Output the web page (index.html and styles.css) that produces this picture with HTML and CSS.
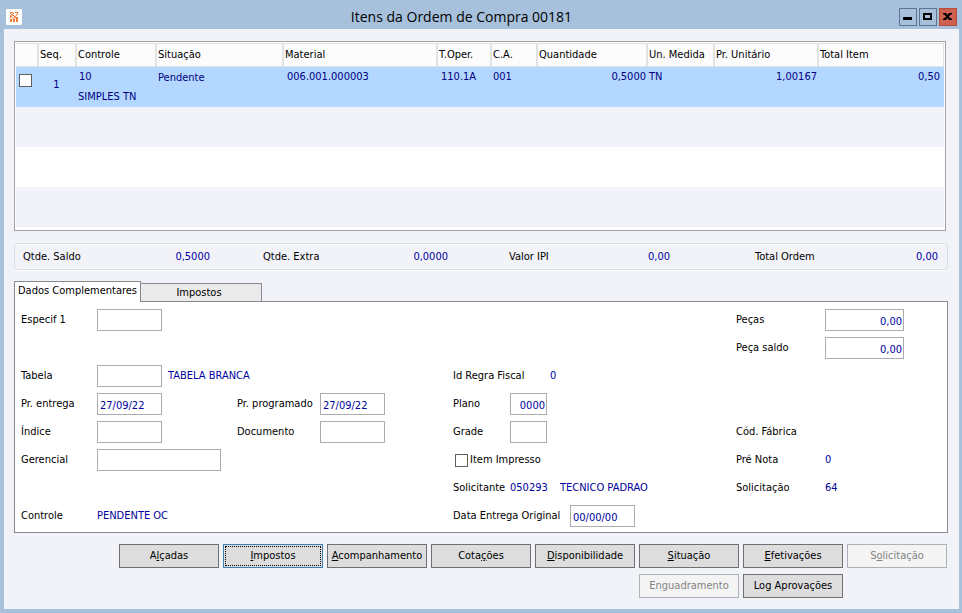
FILE: index.html
```
<!DOCTYPE html>
<html lang="pt-BR">
<head>
<meta charset="UTF-8">
<meta name="viewport" content="width=device-width, initial-scale=1.0">
<title>Itens da Ordem de Compra 00181</title>
<link rel="stylesheet" href="styles.css">
</head>
<body>
  <header class="titlebar">
    <svg class="app-icon" width="16" height="16" viewBox="0 0 16 16">
      <rect width="16" height="16" rx="1" fill="#fff"/>
      <path d="M4 3h3v1H5v1H4zM9 3h3v2h-1V4H9zM4 6h1v2H4zM4 10h2v3H4zM7 10h2v3H7zM10 8h2v5h-2z" fill="#f47b3c"/>
      <path d="M4 9l3-3 2 2 3-4M5 6l3-2M6 9h4" fill="none" stroke="#f9702a"/>
    </svg>
    <h1>Itens da Ordem de Compra 00181</h1>
    <div class="window-buttons">
      <button type="button" aria-label="Minimizar">
        <svg width="16" height="16" viewBox="0 0 16 16"><path d="M3 8h9v3H3z"/></svg>
      </button>
      <button type="button" aria-label="Maximizar">
        <svg width="16" height="16" viewBox="0 0 16 16"><path d="M3 4h9v7H3zM5 6v3h5V6z" fill-rule="evenodd"/></svg>
      </button>
      <button type="button" class="close" aria-label="Fechar">
        <svg width="16" height="16" viewBox="0 0 16 16"><path d="M3 4h3l1.500 2L9 4h3v1L9 7v1l3 2v1H9L7.500 9 6 11H3v-1l3-2V7L3 5z"/></svg>
      </button>
    </div>
  </header>

  <main class="window">
    <div class="items">
      <table>
        <colgroup>
          <col class="c-check"><col class="c-seq"><col class="c-controle"><col class="c-situacao"><col>
          <col class="c-toper"><col class="c-ca"><col class="c-qtd"><col class="c-un"><col class="c-pr"><col class="c-total">
        </colgroup>
        <thead>
          <tr>
            <th></th><th>Seq.</th><th>Controle</th><th>Situação</th><th>Material</th><th>T.Oper.</th>
            <th>C.A.</th><th>Quantidade</th><th>Un. Medida</th><th>Pr. Unitário</th><th>Total Item</th>
          </tr>
        </thead>
        <tbody>
          <tr class="selected">
            <td class="check"><input type="checkbox" aria-label="Selecionar item 1"></td>
            <td class="seq">1</td>
            <td><span class="code">10</span><br>SIMPLES TN</td>
            <td class="status">Pendente</td>
            <td class="code">006.001.000003</td>
            <td class="code">110.1A</td>
            <td>001</td>
            <td class="num">0,5000</td>
            <td>TN</td>
            <td class="num">1,00167</td>
            <td class="num last">0,50</td>
          </tr>
          <tr><td colspan="11"></td></tr>
          <tr><td colspan="11"></td></tr>
          <tr><td colspan="11"></td></tr>
        </tbody>
      </table>
    </div>

    <div class="totals">
      <div><span>Qtde. Saldo</span><span class="value">0,5000</span></div>
      <div><span>Qtde. Extra</span><span class="value">0,0000</span></div>
      <div><span>Valor IPI</span><span class="value">0,00</span></div>
      <div><span>Total Ordem</span><span class="value">0,00</span></div>
    </div>

    <div class="tabs" role="tablist">
      <button type="button" role="tab" class="tab active" aria-selected="true">Dados Complementares</button>
      <button type="button" role="tab" class="tab" aria-selected="false">Impostos</button>
    </div>

    <form class="panel">
      <div class="row">
        <label for="especif">Especif 1</label>
        <input type="text" id="especif">
        <label for="pecas" class="col-d">Peças</label>
        <input type="text" id="pecas" class="amount" value="0,00">
      </div>
      <div class="row">
        <label for="peca-saldo" class="col-d">Peça saldo</label>
        <input type="text" id="peca-saldo" class="amount" value="0,00">
      </div>
      <div class="row">
        <label for="tabela">Tabela</label>
        <div class="field">
          <input type="text" id="tabela">
          <span class="value">TABELA BRANCA</span>
        </div>
        <div class="field wide col-c">
          <span class="regra">Id Regra Fiscal</span>
          <span class="value">0</span>
        </div>
      </div>
      <div class="row">
        <label for="entrega">Pr. entrega</label>
        <input type="text" id="entrega" value="27/09/22">
        <label for="programado" class="col-b">Pr. programado</label>
        <input type="text" id="programado" value="27/09/22">
        <label for="plano" class="col-c">Plano</label>
        <input type="text" id="plano" class="short" value="0000">
      </div>
      <div class="row">
        <label for="indice">Índice</label>
        <input type="text" id="indice">
        <label for="documento" class="col-b">Documento</label>
        <input type="text" id="documento">
        <label for="grade" class="col-c">Grade</label>
        <input type="text" id="grade" class="short">
        <span class="col-d">Cód. Fábrica</span>
      </div>
      <div class="row">
        <label for="gerencial">Gerencial</label>
        <input type="text" id="gerencial" class="long">
        <label class="field check-field wide col-c"><input type="checkbox">Item Impresso</label>
        <span class="col-d">Pré Nota</span>
        <span class="value">0</span>
      </div>
      <div class="row">
        <span class="col-c">Solicitante</span>
        <div class="field">
          <span class="value solicitante">050293</span>
          <span class="value">TECNICO PADRAO</span>
        </div>
        <span class="col-d">Solicitação</span>
        <span class="value">64</span>
      </div>
      <div class="row">
        <span>Controle</span>
        <span class="value">PENDENTE OC</span>
        <div class="field wide col-c">
          <label for="original" class="original">Data Entrega Original</label>
          <input type="text" id="original" value="00/00/00">
        </div>
      </div>
    </form>

    <div class="actions">
      <button type="button">A<u>l</u>çadas</button>
      <button type="button" class="focused"><u>I</u>mpostos</button>
      <button type="button"><u>A</u>companhamento</button>
      <button type="button">Cota<u>ç</u>ões</button>
      <button type="button"><u>D</u>isponibilidade</button>
      <button type="button"><u>S</u>ituação</button>
      <button type="button"><u>E</u>fetivações</button>
      <button type="button" disabled>S<u>o</u>licitação</button>
      <button type="button" class="second-row" disabled>En<u>g</u>uadramento</button>
      <button type="button">Log Aprovações</button>
    </div>
  </main>
</body>
</html>
```

FILE: styles.css
```
* {
  box-sizing: border-box;
}
body {
  display: flex;
  flex-direction: column;
  min-height: 100vh;
  margin: 0;
  padding: 0 3px 4px 4px;
  background-color: #a7c0dc;
  color: #000;
  font-family: Tahoma, "DejaVu Sans Condensed", sans-serif;
  font-size: 11px;
  line-height: 20px;
}
button,
input {
  font: inherit;
  color: inherit;
}

/* title bar */
.titlebar {
  display: grid;
  grid-template-columns: 20px 1fr 60px;
  align-items: center;
  height: 29px;
  padding-top: 5px;
}
.app-icon {
  margin-left: 2px;
}
.titlebar h1 {
  margin: 0;
  font-family: "Open Sans", sans-serif;
  font-size: 14px;
  font-weight: normal;
  text-align: center;
}
.window-buttons {
  display: flex;
  justify-content: flex-end;
  gap: 2px;
  padding-right: 2px;
}
.window-buttons button {
  width: 18px;
  height: 18px;
  padding: 0;
  background-color: transparent;
  border: 1px solid #60738f;
}
.window-buttons svg {
  display: block;
}
.window-buttons .close {
  background-color: #cd604f;
  border-color: #b74b3c;
}

.window {
  flex: 1;
  padding: 12px 11px 11px 10px;
  background-color: #f2f3f9;
}

/* items table */
.items {
  margin-right: 2px;
  padding: 1px 1px 3px;
  background-color: #fff;
  border: 1px solid #a0a1a7;
}
table {
  width: 100%;
  table-layout: fixed;
  border-collapse: separate;
  border-spacing: 0;
}
.c-check { width: 23px; }
.c-seq { width: 38px; }
.c-controle { width: 80px; }
.c-situacao { width: 127px; }
.c-toper { width: 54px; }
.c-ca { width: 46px; }
.c-qtd { width: 110px; }
.c-un { width: 67px; }
.c-pr { width: 104px; }
.c-total { width: 125px; }
th {
  height: 24px;
  padding: 0 0 0 1px;
  background-color: #fcfcfc;
  border-right: 2px solid #e2e2e2;
  border-top: 1px solid #e2e2e2;
  border-bottom: 1px solid #e2e2e2;
  font-weight: normal;
  text-align: left;
  white-space: nowrap;
}
th:last-child {
  border-right-width: 1px;
}
td {
  height: 40px;
  padding: 0 2px 0 1px;
  color: #00007f;
  vertical-align: top;
  white-space: nowrap;
}
tbody tr:nth-child(even) {
  background-color: #f2f3f9;
}
tbody .selected {
  background-color: #b3d7ff;
}
.code {
  padding-left: 3px;
}
span.code {
  padding-left: 1px;
}
.num {
  text-align: right;
}
.last {
  padding-right: 4px;
}
.seq {
  padding-top: 8px;
  padding-right: 4px;
  text-align: center;
}
.status {
  padding-top: 1px;
}
.check {
  padding: 7px 3px;
}

input[type="checkbox"] {
  appearance: none;
  display: block;
  width: 13px;
  height: 13px;
  margin: 0;
  background-color: #fff;
  border: 1px solid #5e5e5e;
}

/* totals */
.totals {
  display: grid;
  grid-template-columns: 240fr 246fr 246fr 183fr;
  margin-top: 12px;
  padding: 3px 9px 2px 8px;
  border: 1px solid #dadde3;
  border-radius: 3px;
  box-shadow: 0 1px 0 #fff, inset 0 1px 0 #fff;
}
.totals div {
  display: flex;
  justify-content: space-between;
}
.totals div:nth-child(1) { padding-right: 53px; }
.totals div:nth-child(2) { padding-right: 61px; }
.totals div:nth-child(3) { padding-right: 85px; }
.value {
  color: #0000a0;
}

/* tabs */
.tabs {
  display: flex;
  align-items: flex-end;
  margin-top: 11px;
}
.tab {
  width: 121px;
  height: 18px;
  padding: 0 4px 0 0;
  background-color: #eaeaea;
  border: 1px solid #898990;
  border-width: 1px 1px 0 0;
  line-height: 18px;
}
.tab.active {
  z-index: 1;
  width: 127px;
  height: 21px;
  margin-bottom: -1px;
  padding: 0 0 2px;
  background-color: #fff;
  border-left-width: 1px;
}

/* form */
.panel {
  padding: 4px 0 2px 6px;
  background-color: #fff;
  border: 1px solid #898990;
}
.row {
  display: grid;
  grid-template-columns: 76px 140px 83px 133px 57px 1fr 89px 122px;
  align-items: center;
  height: 28px;
  white-space: nowrap;
}
.col-b { grid-column: 3; }
.col-c { grid-column: 5; }
.col-c.wide { grid-column: 5 / 7; }
.col-d { grid-column: 7; }
.field {
  display: flex;
  align-items: center;
}
.field .value {
  margin-left: 6px;
}
input[type="text"] {
  width: 65px;
  height: 22px;
  padding: 2px 2px 0;
  background-color: #fff;
  border: 1px solid #ababb0;
  border-radius: 0;
  color: #0000a0;
}
input.amount {
  width: 79px;
  padding-right: 1px;
  text-align: right;
}
input.short {
  width: 37px;
  padding-right: 1px;
  text-align: right;
}
input.long {
  width: 124px;
}
.row .amount { width: 79px; }
.row .short { width: 37px; }
.row .long { width: 124px; }
.regra {
  width: 91px;
}
.check-field {
  gap: 2px;
  padding-left: 2px;
}
.field .solicitante {
  width: 50px;
  margin-left: 0;
}
.field .solicitante + .value {
  margin-left: 0;
}
.original {
  width: 117px;
}

/* buttons */
.actions {
  display: grid;
  grid-template-columns: repeat(8, 100px);
  justify-content: end;
  gap: 6px 4px;
  margin-top: 11px;
  padding-right: 1px;
}
.actions button {
  height: 24px;
  padding: 0;
  background-color: #dddddd;
  border: 1px solid #707070;
  line-height: 20px;
}
.actions .focused {
  border-color: #3c7fb1;
  outline: 1px dotted #000;
  outline-offset: -3px;
}
.actions button:disabled {
  background-color: #f4f4f4;
  border-color: #adb2b5;
  color: #838383;
}
.second-row {
  grid-column: 6;
}
```
